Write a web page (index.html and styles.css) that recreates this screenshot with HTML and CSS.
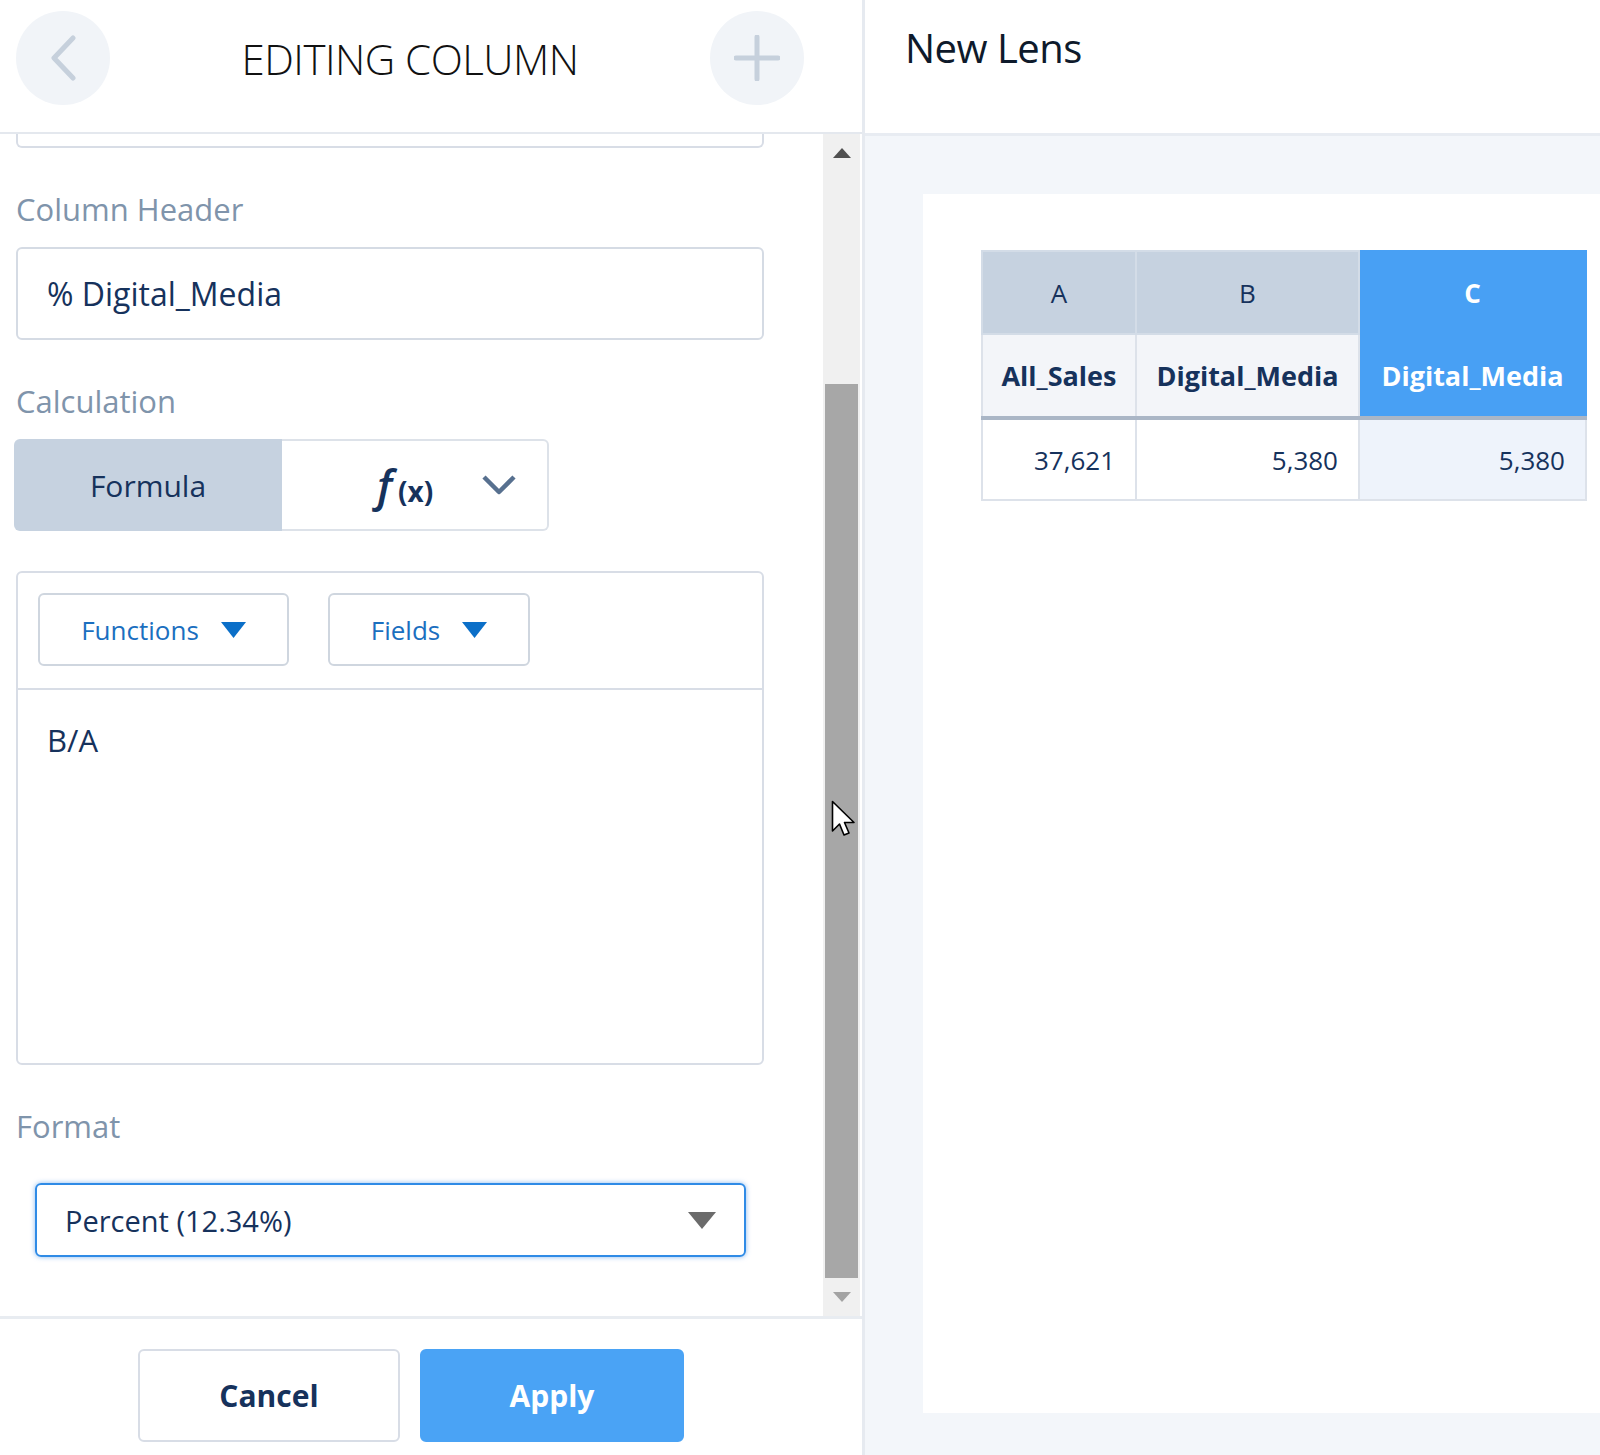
FILE: index.html
```html
<!DOCTYPE html>
<html lang="en">
<head>
    <meta charset="UTF-8">
    <title>Editing Column</title>
    <link rel="stylesheet" href="styles.css">
</head>
<body>
<div class="app">
    <section class="editor">
        <header class="editor-head">
            <button class="round-btn">
                <svg width="30" height="46" viewBox="0 0 30 46"><path d="M25 3 L6 23 L25 43" fill="none" stroke="#c6d0dc" stroke-width="5" stroke-linecap="round" stroke-linejoin="round"/></svg>
            </button>
            <h1 class="editor-title">EDITING COLUMN</h1>
            <button class="round-btn">
                <svg width="46" height="46" viewBox="0 0 46 46"><path d="M23 2 V44 M2 23 H44" fill="none" stroke="#c6d0dc" stroke-width="5" stroke-linecap="round"/></svg>
            </button>
        </header>
        <div class="editor-body">
            <div class="editor-scroll">
                <div class="clipped-box"></div>
                <label class="field-label">Column Header</label>
                <div class="text-input">% Digital_Media</div>
                <label class="field-label">Calculation</label>
                <div class="segmented">
                    <div class="seg-on">Formula</div>
                    <div class="seg-pick">
                        <span class="fx"><i>f</i><b>(x)</b></span>
                        <svg width="36" height="22" viewBox="0 0 36 22"><path d="M3 3 L18 18 L33 3" fill="none" stroke="#57708f" stroke-width="4.5" stroke-linejoin="round"/></svg>
                    </div>
                </div>
                <div class="formula-box">
                    <div class="formula-tools">
                        <button class="drop functions">Functions <svg width="25" height="16" viewBox="0 0 25 16"><path d="M0 0 H25 L12.5 16 Z" fill="#0b6fc8"/></svg></button>
                        <button class="drop fields">Fields <svg width="25" height="16" viewBox="0 0 25 16"><path d="M0 0 H25 L12.5 16 Z" fill="#0b6fc8"/></svg></button>
                    </div>
                    <div class="formula-text">B/A</div>
                </div>
                <label class="field-label">Format</label>
                <div class="select">
                    <span>Percent (12.34%)</span>
                    <svg width="28" height="17" viewBox="0 0 28 17"><path d="M0 0 H28 L14 17 Z" fill="#6b6b6b"/></svg>
                </div>
            </div>
            <div class="scrollbar">
                <div class="sb-arrow"><svg width="18" height="10" viewBox="0 0 18 10"><path d="M0 10 H18 L9 0 Z" fill="#505050"/></svg></div>
                <div class="sb-track"><div class="sb-thumb"></div></div>
                <div class="sb-arrow"><svg width="18" height="10" viewBox="0 0 18 10"><path d="M0 0 H18 L9 10 Z" fill="#a3a3a3"/></svg></div>
            </div>
        </div>
        <footer class="editor-foot">
            <button class="btn">Cancel</button>
            <button class="btn primary">Apply</button>
        </footer>
    </section>
    <section class="lens">
        <header class="lens-head">
            <h2 class="lens-title">New Lens</h2>
        </header>
        <div class="lens-canvas">
            <div class="lens-card">
                <table class="grid">
                    <tr class="letters">
                        <th class="col-a">A</th>
                        <th class="col-b">B</th>
                        <th class="col-c sel">C</th>
                    </tr>
                    <tr class="names">
                        <th>All_Sales</th>
                        <th>Digital_Media</th>
                        <th class="sel">Digital_Media</th>
                    </tr>
                    <tr class="values">
                        <td>37,621</td>
                        <td>5,380</td>
                        <td class="sel">5,380</td>
                    </tr>
                </table>
            </div>
        </div>
    </section>
    <svg class="cursor" width="26" height="40" viewBox="0 0 26 40"><path d="M1.5 1.5 V31 L8.5 24 L13 35 L18 33 L13.5 22.5 L23 22.5 Z" fill="#fff" stroke="#000" stroke-width="1.6" stroke-linejoin="round"/></svg>
</div>
</body>
</html>
```

FILE: styles.css
```css
body {
    margin: 0;
    font-family: "Open Sans", "Noto Sans", sans-serif;
    color: #16325c;
}
button {
    font-family: inherit;
    cursor: pointer;
}
.app {
    position: relative;
    display: flex;
    width: 1600px;
    height: 1455px;
    overflow: hidden;
    background: #fff;
}

/* left: column editor */
.editor {
    width: 862px;
    flex: none;
    display: flex;
    flex-direction: column;
}
.editor-head {
    height: 132px;
    border-bottom: 2px solid #e4e8ee;
    display: flex;
    align-items: center;
    justify-content: space-between;
    padding: 0 58px 0 16px;
}
.round-btn {
    width: 94px;
    height: 94px;
    border: none;
    border-radius: 50%;
    background: #f1f4f8;
    display: flex;
    align-items: center;
    justify-content: center;
    padding: 0;
    margin-top: -16px;
}
.editor-title {
    margin: -16px 0 0;
    font-size: 42px;
    font-weight: 300;
    color: #111;
    letter-spacing: -0.5px;
}
.editor-body {
    flex: 1;
    display: flex;
    min-height: 0;
}
.editor-scroll {
    flex: 1;
    padding: 0 59px 0 16px;
}
.clipped-box {
    height: 12px;
    border: 2px solid #d8dde6;
    border-top: none;
    border-radius: 0 0 6px 6px;
}
.field-label {
    display: block;
    margin: 41px 0 18px;
    font-size: 31px;
    line-height: 40px;
    color: #7f94ab;
}
.text-input {
    height: 89px;
    border: 2px solid #d5dbe4;
    border-radius: 6px;
    padding-left: 29px;
    display: flex;
    align-items: center;
    font-size: 32px;
}
.segmented {
    display: flex;
    width: 535px;
    height: 92px;
    margin-left: -2px;
}
.seg-on {
    width: 268px;
    background: #c6d2e0;
    border-radius: 6px 0 0 6px;
    display: flex;
    align-items: center;
    justify-content: center;
    font-size: 30px;
}
.seg-pick {
    flex: 1;
    border: 2px solid #dde2e9;
    border-left: none;
    border-radius: 0 6px 6px 0;
    display: flex;
    align-items: center;
    padding-left: 95px;
    gap: 48px;
}
.fx {
    display: flex;
    align-items: baseline;
}
.fx i {
    font-size: 44px;
    font-weight: 600;
    color: #16325c;
}
.fx b {
    font-size: 28px;
    margin-left: 6px;
    font-weight: 700;
}
.formula-box {
    margin-top: 40px;
    height: 490px;
    border: 2px solid #d8dde6;
    border-radius: 6px;
}
.formula-tools {
    height: 95px;
    padding: 20px 0 0 20px;
    border-bottom: 2px solid #d8dde6;
    display: flex;
    gap: 39px;
}
.drop {
    height: 73px;
    border: 2px solid #cfd6df;
    border-radius: 6px;
    background: #fff;
    display: flex;
    align-items: center;
    justify-content: center;
    gap: 22px;
    font-size: 26px;
    color: #1b6fbf;
    padding: 0;
}
.drop.functions {
    width: 251px;
}
.drop.fields {
    width: 202px;
}
.formula-text {
    padding: 30px 29px;
    font-size: 31px;
    line-height: 40px;
}
.select {
    margin: 37px 18px 0 19px;
    height: 70px;
    border: 2px solid #2f8be6;
    border-radius: 6px;
    box-shadow: 0 0 5px rgba(60, 140, 230, 0.6);
    display: flex;
    align-items: center;
    justify-content: space-between;
    padding: 0 28px 0 28px;
    font-size: 29px;
}
.scrollbar {
    width: 37px;
    margin-right: 2px;
    background: #f0f0f0;
    display: flex;
    flex-direction: column;
}
.sb-arrow {
    height: 38px;
    display: flex;
    align-items: center;
    justify-content: center;
}
.sb-track {
    flex: 1;
    padding: 212px 2px 0;
}
.sb-thumb {
    height: 100%;
    background: #a7a7a7;
}
.editor-foot {
    height: 139px;
    border-top: 3px solid #e8ecf1;
    display: flex;
    justify-content: center;
    padding: 30px 40px 0 0;
    gap: 20px;
    box-sizing: border-box;
}
.btn {
    width: 262px;
    height: 93px;
    border: 2px solid #d8dde6;
    border-radius: 6px;
    background: #fff;
    font-size: 30px;
    font-weight: 700;
    color: #16325c;
}
.btn.primary {
    width: 264px;
    border-color: #4aa3f5;
    background: #4aa3f5;
    color: #fff;
}

/* right: lens preview */
.lens {
    flex: 1;
    border-left: 3px solid #e6eaf0;
    display: flex;
    flex-direction: column;
}
.lens-head {
    height: 136px;
    border-bottom: 3px solid #e8ecf2;
    box-sizing: border-box;
    padding: 20px 0 0 40px;
}
.lens-title {
    margin: 0;
    font-size: 40px;
    line-height: 56px;
    font-weight: 400;
    color: #0e1a2b;
    letter-spacing: -0.5px;
}
.lens-canvas {
    flex: 1;
    background: #f3f6fa;
    padding: 58px 0 42px 58px;
    display: flex;
}
.lens-card {
    flex: 1;
    background: #fff;
    padding: 56px 0 0 58px;
}
.grid {
    border-collapse: collapse;
    width: 606px;
    font-size: 26px;
}
.grid th,
.grid td {
    border: 2px solid #dde2ea;
    padding: 0;
}
.letters th {
    height: 81px;
    background: #c6d2e0;
    font-weight: 400;
    border-color: #d3dce7;
}
.col-a {
    width: 152px;
}
.col-b {
    width: 221px;
}
.names th {
    height: 81px;
    background: #f3f5f9;
    font-weight: 700;
    font-size: 27px;
    border-bottom: 4px solid #aab6c6;
}
.values td {
    height: 79px;
    text-align: right;
    padding-right: 20px;
    background: #fff;
}
.grid th.sel {
    background: #48a0f4;
    color: #fff;
    font-weight: 700;
    border-color: #48a0f4;
}
.names th.sel {
    border-bottom-color: #aab6c6;
}
.grid td.sel {
    background: #eef3fb;
}
.cursor {
    position: absolute;
    left: 831px;
    top: 800px;
}
```
